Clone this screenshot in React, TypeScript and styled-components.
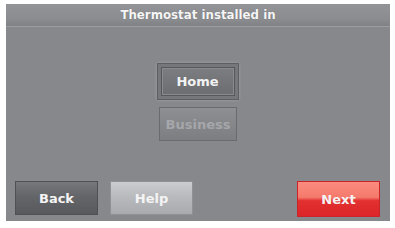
import { createGlobalStyle, styled } from "styled-components";

const GlobalStyle = createGlobalStyle`
  html, body {
    margin: 0;
    padding: 0;
    background: #ffffff;
  }
  body {
    font-family: "DejaVu Sans", "Liberation Sans", sans-serif;
  }
`;

const Screen = styled.div`
  margin: 4px 0 0 6px;
  width: 384px;
  height: 217px;
  background-color: #87888c;
  display: flex;
  flex-direction: column;
  box-sizing: border-box;
`;

const Header = styled.div`
  height: 22px;
  display: flex;
  align-items: center;
  justify-content: center;
  background: linear-gradient(#939498, #8b8c90 70%, #808185);
  border-bottom: 1px solid #9c9da1;
  color: #f6f6f6;
  font-size: 11.8px;
  font-weight: bold;
  text-shadow: 0 0 1px rgba(0, 0, 0, 0.3);
`;

const Choices = styled.div`
  flex: 1;
  display: flex;
  flex-direction: column;
  align-items: center;
  padding-top: 36px;
  gap: 7px;
`;

const SelectedRing = styled.div`
  width: 82px;
  height: 37px;
  box-sizing: border-box;
  padding: 3px;
  background: #76777b;
  border: 1px solid #5e5f63;
  box-shadow: 0 0 3px rgba(165, 165, 170, 0.9);
  display: flex;
  margin-left: -1px;
`;

const ChoiceButton = styled.div<{ $dim?: boolean }>`
  flex: ${(p) => (p.$dim ? "none" : "1")};
  width: ${(p) => (p.$dim ? "78px" : "auto")};
  height: ${(p) => (p.$dim ? "34px" : "auto")};
  box-sizing: border-box;
  display: flex;
  align-items: center;
  justify-content: center;
  font-size: 13px;
  font-weight: bold;
  color: ${(p) => (p.$dim ? "#a6a7aa" : "#f2f2f2")};
  background: ${(p) =>
    p.$dim
      ? "linear-gradient(#8e8f93, #7d7e82)"
      : "linear-gradient(#7c7d81, #6c6d71)"};
  border: 1px solid ${(p) => (p.$dim ? "#6a6b6f" : "#56575b")};
  box-shadow: ${(p) => (p.$dim ? "none" : "inset 0 0 0 1px #8a8b8f")};
`;

const Footer = styled.div`
  display: flex;
  align-items: flex-start;
  padding: 0 10px 4px 9px;
  gap: 12px;
  height: 36px;
`;

const Spacer = styled.div`
  flex: 1;
`;

const NavButton = styled.div<{ $variant: "dark" | "light" | "red" }>`
  width: 83px;
  height: ${(p) => (p.$variant === "red" ? "36px" : "34px")};
  box-sizing: border-box;
  display: flex;
  align-items: center;
  justify-content: center;
  font-size: 13px;
  font-weight: bold;
  color: #f4f4f4;
  border: 1px solid
    ${(p) =>
      p.$variant === "dark" ? "#4f5054" : p.$variant === "light" ? "#909195" : "#c8242a"};
  background: ${(p) =>
    p.$variant === "dark"
      ? "linear-gradient(#77787c, #646569 45%, #58595d)"
      : p.$variant === "light"
      ? "linear-gradient(#cbcccf, #b9babd 45%, #a9aaad)"
      : "linear-gradient(#fb8c7e, #f47a6c 45%, #e2302f 55%, #dc2529)"};
`;

export default function App() {
  return (
    <>
      <GlobalStyle />
      <Screen>
        <Header>Thermostat installed in</Header>
        <Choices>
          <SelectedRing>
            <ChoiceButton>Home</ChoiceButton>
          </SelectedRing>
          <ChoiceButton $dim>Business</ChoiceButton>
        </Choices>
        <Footer>
          <NavButton $variant="dark">Back</NavButton>
          <NavButton $variant="light">Help</NavButton>
          <Spacer />
          <NavButton $variant="red">Next</NavButton>
        </Footer>
      </Screen>
    </>
  );
}
